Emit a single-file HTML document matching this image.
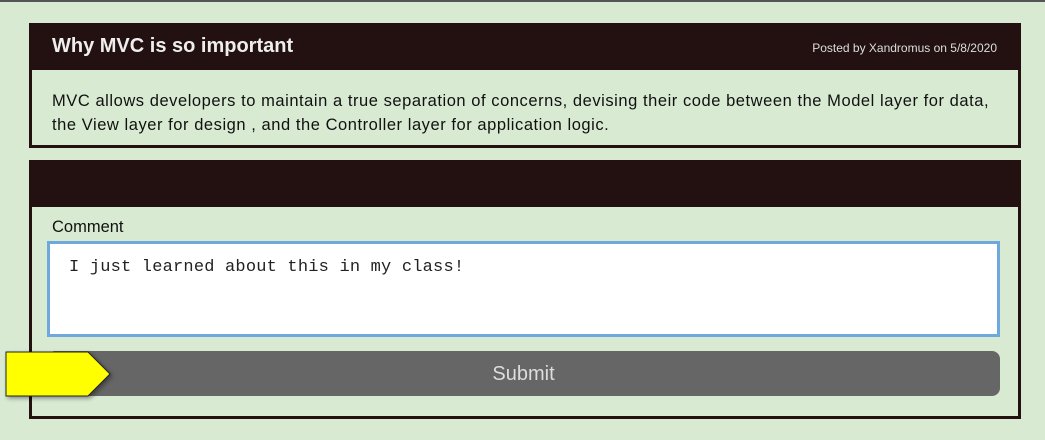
<!DOCTYPE html>
<html><head><style>
body{margin:0;width:1045px;height:440px;background:#d9ead3;position:relative;overflow:hidden;font-family:"Liberation Sans",sans-serif;}
.top{position:absolute;left:0;top:0;width:1045px;height:2px;background:#555;}
.card{position:absolute;left:29px;width:986px;border:3px solid #231111;border-top:none;background:#d9ead3;}
.hd{background:#231111;height:47px;color:#eee;position:relative;margin:0 -3px;}
.t{position:absolute;left:23px;top:12px;font-size:20px;font-weight:bold;}
.m{position:absolute;right:24px;top:18px;font-size:12px;color:#ddd;}
.b{font-size:16.5px;letter-spacing:0.55px;color:#111;line-height:24px;padding:19px 8px 0 20px;}
.ta{position:absolute;left:47px;top:241px;border:3px solid #6fa8dc;background:#fff;font-family:"Liberation Mono",monospace;font-size:17px;letter-spacing:0.2px;color:#222;box-sizing:border-box;width:953px;height:96px;padding:14px 0 0 19px;}
.btn{position:absolute;left:47px;top:351px;width:953px;height:45px;background:#666;border-radius:8px;color:#ddd;font-size:20px;text-align:center;line-height:47px;}
</style></head><body>
<div class="top"></div>
<div class="card" style="top:23px;height:122px;">
<div class="hd"><span class="t">Why MVC is so important</span><span class="m">Posted by Xandromus on 5/8/2020</span></div>
<div class="b">MVC allows developers to maintain a true separation of concerns, devising their code between the Model layer for data,<br>the View layer for design , and the Controller layer for application logic.</div>
</div>
<div class="card" style="top:160px;height:256px;">
<div class="hd"></div>
<div style="position:absolute;left:20px;top:58px;font-size:16.5px;color:#111;">Comment</div>
</div>
<div class="ta">I just learned about this in my class!</div>
<div class="btn">Submit</div>
<svg style="position:absolute;left:0;top:345px" width="120" height="60"><polygon points="6,7 88,7 110,29 88,51 6,51" fill="#ffff00" stroke="#222" stroke-width="1" style="filter:drop-shadow(2px 2px 2px rgba(0,0,0,.4))"/></svg>
</body></html>
